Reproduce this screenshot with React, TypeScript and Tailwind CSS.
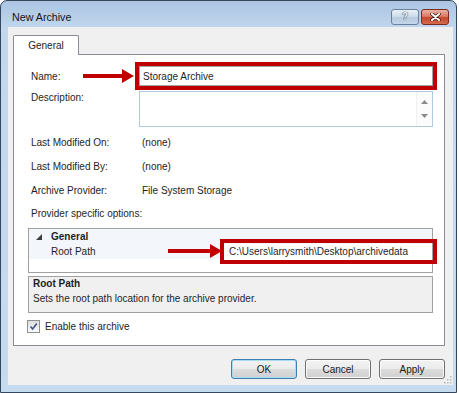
import React from 'react';

function RedArrow({ width }: { width: number }) {
  return (
    <svg width={width} height={14} viewBox={`0 0 ${width} 14`}>
      <rect x={0} y={5} width={width - 11} height={4} fill="#c00000" />
      <polygon points={`${width - 12},0 ${width},7 ${width - 12},14`} fill="#c00000" />
    </svg>
  );
}

function DialogButton({ label, primary }: { label: string; primary?: boolean }) {
  return (
    <button
      className={`w-[66px] h-[20px] rounded-[3px] border text-[10px] text-[#1b1b1b] flex items-center justify-center bg-[linear-gradient(to_bottom,#f3f3f3_0%,#ebebeb_50%,#dddddd_50%,#cfcfcf_100%)] ${
        primary ? 'border-[#3c7fb1] shadow-[inset_0_0_0_1px_#a6dcf5]' : 'border-[#707070] shadow-[inset_0_0_0_1px_#fcfcfc]'
      }`}
    >
      {label}
    </button>
  );
}

function InfoRow({ label, value, className }: { label: string; value: string; className: string }) {
  return (
    <div className={`flex h-[14px] items-center leading-[14px] ${className}`}>
      <div className="w-[111px] pl-[3px]">{label}</div>
      <div className="pl-[3px]">{value}</div>
    </div>
  );
}

export default function App() {
  return (
    <div className="w-[459px] h-[393px] bg-white font-['Liberation_Sans',Arial,sans-serif] text-[10px] text-[#1e1e1e]">
      <div className="w-[457px] h-[393px] rounded-t-[7px] border border-[#34475e] flex flex-col pl-[7px] pr-[3px] pb-[7px] bg-[linear-gradient(to_bottom,#aac4e2_0px,#c2d7ee_27px,#c6dbf0_100%)]">
        {/* Title bar */}
        <div className="h-[26px] flex items-start shrink-0">
          <span className="mt-[10px] ml-[4px] text-[10.7px] leading-[13px] text-[#151515]">New Archive</span>
          <div className="ml-auto mr-[4px] mt-[8px] flex gap-[2px]">
            <div className="w-[28px] h-[16px] rounded-[3px] border border-[#6a7f9a] bg-[linear-gradient(to_bottom,#e9f0f7_0%,#cfdcea_45%,#b7cade_55%,#c4d6ea_100%)] flex items-center justify-center">
              <span className="text-[10px] font-bold leading-none text-[#f7f9fc] [text-shadow:0_0_1px_#24364f,0_0_1px_#24364f]">?</span>
            </div>
            <div className="w-[28px] h-[16px] rounded-[3px] border border-[#7b2b1f] bg-[linear-gradient(to_bottom,#eab1a4_0%,#d97b64_45%,#c6462d_55%,#d36c4e_100%)] flex items-center justify-center">
              <svg width={11} height={8} viewBox="0 0 11 8">
                <path d="M2 1 L9 7 M9 1 L2 7" stroke="#3a1a14" strokeWidth={3.4} strokeLinecap="round" />
                <path d="M2 1 L9 7 M9 1 L2 7" stroke="#ffffff" strokeWidth={2} strokeLinecap="round" />
              </svg>
            </div>
          </div>
        </div>

        {/* Client area */}
        <div className="relative flex-1 bg-[#f0f0f0] pl-[5px] pt-[8px] flex flex-col">
          {/* Tab */}
          <div className="relative z-10 w-[66px] h-[20px] -mb-px border border-b-0 border-[#898c95] rounded-t-[2px] bg-white flex items-center justify-center">
            General
          </div>

          {/* Tab panel */}
          <div className="w-[432px] h-[292px] border border-[#898c95] bg-white">
            <div className="relative pt-[11px] pl-[14px] pr-[11px] flex flex-col">
              {/* Name */}
              <div className="flex h-[20px] items-center">
                <div className="w-[111px] pl-[3px]">Name:</div>
                <div className="flex-1 h-[20px] border border-[#a3a3a3] bg-white pl-[3px] flex items-center">Storage Archive</div>
              </div>

              {/* Description */}
              <div className="flex mt-[5px] h-[36px]">
                <div className="w-[111px] pl-[3px] leading-[14px]">Description:</div>
                <div className="flex-1 border border-[#b0c9e3] bg-white flex justify-end">
                  <div className="w-[16px] h-full flex flex-col items-center justify-between py-[8px] border-l border-[#f0f0f0] bg-[#fbfbfb]">
                    <svg width={7} height={4} viewBox="0 0 7 4">
                      <polygon points="0,4 3.5,0 7,4" fill="#8a8a8a" />
                    </svg>
                    <svg width={7} height={4} viewBox="0 0 7 4">
                      <polygon points="0,0 7,0 3.5,4" fill="#8a8a8a" />
                    </svg>
                  </div>
                </div>
              </div>

              <InfoRow label="Last Modified On:" value="(none)" className="mt-[9px]" />
              <InfoRow label="Last Modified By:" value="(none)" className="mt-[10px]" />
              <InfoRow label="Archive Provider:" value="File System Storage" className="mt-[10px]" />
              <div className="mt-[9px] h-[14px] leading-[14px] pl-[3px]">Provider specific options:</div>

              {/* Property grid */}
              <div className="mt-[7px] h-[45px] border border-[#a0a0a0] bg-white">
                <div className="h-[30px] bg-[#f3f6fb] flex flex-col">
                  <div className="h-[15px] flex items-center">
                    <div className="w-[22px] pl-[7px] flex items-center">
                      <svg width={6} height={6} viewBox="0 0 6 6">
                        <polygon points="6,0 6,6 0,6" fill="#3c3c3c" />
                      </svg>
                    </div>
                    <span className="font-bold">General</span>
                  </div>
                  <div className="h-[15px] flex items-center">
                    <div className="w-[195px] pl-[22px]">Root Path</div>
                    <div className="flex-1 h-full bg-white pl-[5px] flex items-center">C:\Users\larrysmith\Desktop\archivedata</div>
                  </div>
                </div>
              </div>

              {/* Property description */}
              <div className="mt-[3px] h-[37px] border border-[#a0a0a0] bg-[#f0f0f0] px-[4px] leading-[14px]">
                <div className="font-bold">Root Path</div>
                <div className="mt-px">Sets the root path location for the archive provider.</div>
              </div>

              {/* Enable checkbox */}
              <div className="mt-[7px] -ml-px flex items-center gap-[5px] h-[13px]">
                <div className="w-[13px] h-[13px] border border-[#8e8f8f] bg-[linear-gradient(to_bottom,#dedede,#fbfbfb)] flex items-center justify-center">
                  <svg width={9} height={9} viewBox="0 0 9 9">
                    <path d="M1.5 4.5 L3.6 7 L7.8 1.5" stroke="#3d528a" strokeWidth={1.6} fill="none" />
                  </svg>
                </div>
                <span>Enable this archive</span>
              </div>

              {/* Annotations */}
              <div className="absolute left-[121px] top-[7px] w-[302px] h-[28px] border-4 border-[#c00000]" />
              <div className="absolute left-[69px] top-[14px]">
                <RedArrow width={51} />
              </div>
              <div className="absolute left-[206px] top-[184px] w-[217px] h-[25px] border-4 border-[#c00000]" />
              <div className="absolute left-[154px] top-[189px]">
                <RedArrow width={54} />
              </div>
            </div>
          </div>

          {/* Dialog buttons */}
          <div className="mt-[13px] w-[432px] flex justify-end gap-[8px]">
            <DialogButton label="OK" primary />
            <DialogButton label="Cancel" />
            <DialogButton label="Apply" />
          </div>

          {/* Size grip */}
          <div className="absolute right-[1px] bottom-[1px]">
            <svg width={8} height={8} viewBox="0 0 8 8">
              <rect x={6} y={0} width={1.5} height={1.5} fill="#b5b5b5" />
              <rect x={3} y={3} width={1.5} height={1.5} fill="#b5b5b5" />
              <rect x={6} y={3} width={1.5} height={1.5} fill="#b5b5b5" />
              <rect x={0} y={6} width={1.5} height={1.5} fill="#b5b5b5" />
              <rect x={3} y={6} width={1.5} height={1.5} fill="#b5b5b5" />
              <rect x={6} y={6} width={1.5} height={1.5} fill="#b5b5b5" />
            </svg>
          </div>
        </div>
      </div>
    </div>
  );
}
